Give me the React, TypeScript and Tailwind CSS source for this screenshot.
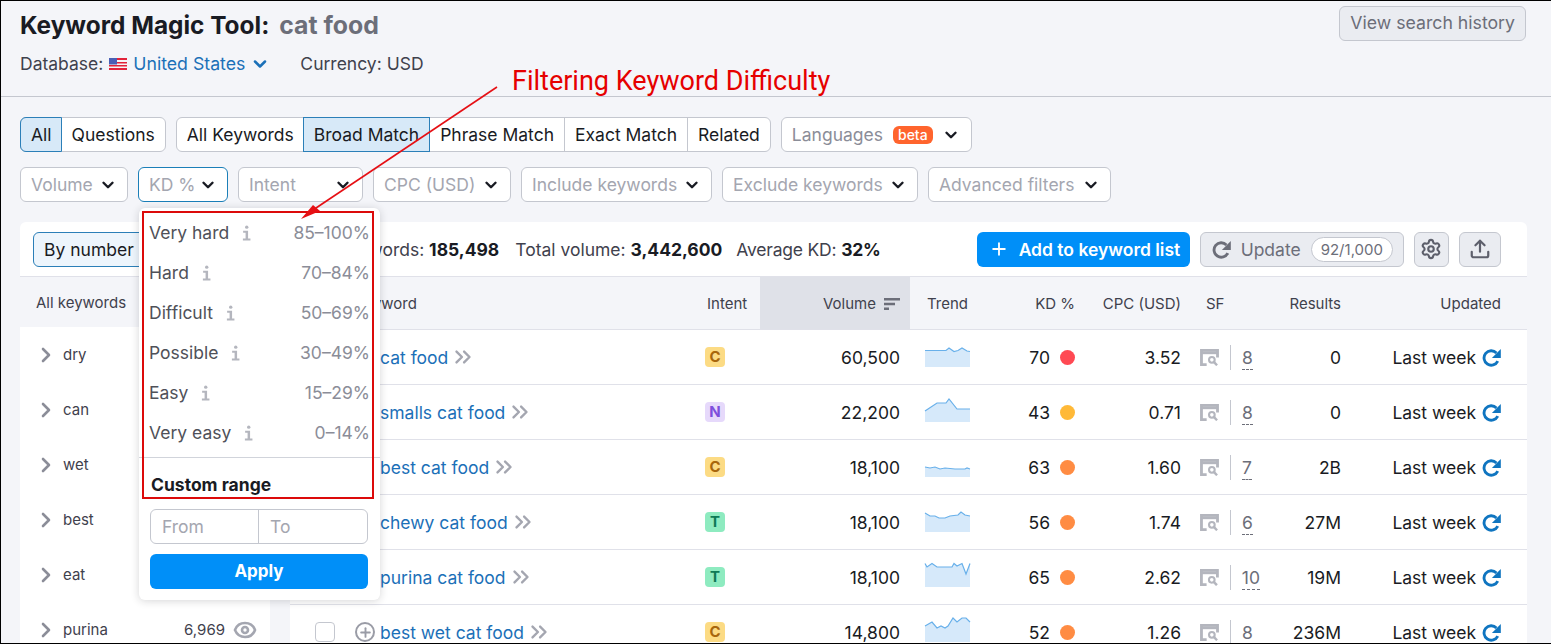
import { ChevronDown, ChevronRight, ChevronsRight, Eye, Plus, Settings, Upload } from "lucide-react";

const rows = [
	{ kw: "cat food", intent: "C", vol: "60,500", kd: 70, dot: "bg-[#ff4953]", cpc: "3.52", sf: "8", res: "0", spark: "0,3.5 21,3.5 24,1 29,4.5 33,3.5 37,1 42,4 45,4.5" },
	{ kw: "smalls cat food", intent: "N", vol: "22,200", kd: 43, dot: "bg-[#ffb938]", cpc: "0.71", sf: "8", res: "0", spark: "0,9 12,1 21,1 24,-3 32,7 36,7 45,7" },
	{ kw: "best cat food", intent: "C", vol: "18,100", kd: 63, dot: "bg-[#ff8c43]", cpc: "1.60", sf: "7", res: "2B", spark: "0,10 5,11 10,10 15,12 20,11 30,12 40,12 42,11 45,12" },
	{ kw: "chewy cat food", intent: "T", vol: "18,100", kd: 56, dot: "bg-[#ff8c43]", cpc: "1.74", sf: "6", res: "27M", spark: "0,1 5,4 10,4 14,6 20,6 25,4 33,3 36,0 40,3 45,4" },
	{ kw: "purina cat food", intent: "T", vol: "18,100", kd: 65, dot: "bg-[#ff8c43]", cpc: "2.62", sf: "10", res: "19M", spark: "0,-3.5 2,0 7,-3.5 12,0 27,0 29,-3.5 32,-1 37,-3.5 41,7 45,-3.5" },
	{ kw: "best wet cat food", intent: "C", vol: "14,800", kd: 52, dot: "bg-[#ff8c43]", cpc: "1.26", sf: "8", res: "236M", spark: "0,4 7,0 12,6 16,4 20,6 23,4 28,-4 32,0 37,-4 41,-4 45,0" },
];

const groups = ["dry", "can", "wet", "best", "eat", "purina"];

const levels = [
	{ name: "Very hard", range: "85–100%" },
	{ name: "Hard", range: "70–84%" },
	{ name: "Difficult", range: "50–69%" },
	{ name: "Possible", range: "30–49%" },
	{ name: "Easy", range: "15–29%" },
	{ name: "Very easy", range: "0–14%" },
];

const filters = [
	{ label: "Volume", w: "w-[108px]" },
	{ label: "KD %", w: "w-[90px]", active: true },
	{ label: "Intent", w: "w-[125px]" },
	{ label: "CPC (USD)", w: "w-[138px]" },
	{ label: "Include keywords", w: "w-[191px]" },
	{ label: "Exclude keywords", w: "w-[196px]" },
	{ label: "Advanced filters", w: "w-[183px]" },
];

const intentStyles: Record<string, string> = {
	C: "bg-[#fcdb84] text-[#a8660c]",
	N: "bg-[#e6d9fb] text-[#7e4fdc]",
	T: "bg-[#8eebc0] text-[#0e7a56]",
};

const rowGrid = "grid grid-cols-[410px_60px_150px_75px_100px_105px_70px_90px_177px]";

function Chevron() {
	return <ChevronDown size={18} strokeWidth={3.2} className="text-[#191b23] shrink-0" />;
}

function Refresh({ className }: { className: string }) {
	return (
		<svg viewBox="0 0 20 20" className={className} fill="none">
			<path d="M16.6 13.8A7.6 7.6 0 1 1 15.2 5.2" stroke="currentColor" strokeWidth="3" />
			<path d="M19.8 1v9.4h-9.4z" fill="currentColor" />
		</svg>
	);
}

function SerpIcon() {
	return (
		<svg viewBox="0 0 20 18" className="w-[19px] h-[17px] text-[#b4b6be]" fill="none">
			<path d="M7 16.5H1.5V1.5h17V9" stroke="currentColor" strokeWidth="3" />
			<path d="M1.5 4h17" stroke="currentColor" strokeWidth="3" />
			<circle cx="12.5" cy="11.5" r="3" stroke="currentColor" strokeWidth="2.2" />
			<path d="M14.8 14l3.2 3.2" stroke="currentColor" strokeWidth="2.6" />
		</svg>
	);
}

function InfoIcon() {
	return (
		<svg viewBox="0 0 8 14" className="w-[9px] h-4 text-[#b4b6be]" fill="currentColor">
			<circle cx="4.2" cy="1.8" r="1.5" />
			<path d="M1 5h4.4v6.8H7.5V13.6H.8v-1.8h2.4V6.8H1z" />
		</svg>
	);
}

function Flag() {
	return (
		<svg viewBox="0 0 18 12" className="w-[18px] h-3">
			<rect width="18" height="12" fill="#f5f5f5" />
			<path d="M0 0h18v2H0zM0 4h18v1.5H0zM0 7h18v1.5H0zM0 10h18v2H0z" fill="#e2233a" />
			<rect width="8" height="6.5" fill="#4a5fb5" />
		</svg>
	);
}

function Spark({ points }: { points: string }) {
	return (
		<svg viewBox="0 -5 45 25" className="w-[45px] h-[25px] -mt-[5px] overflow-visible">
			<polygon points={`0,20 ${points} 45,20`} fill="#d6e9fa" />
			<polyline points={points} fill="none" stroke="#68b0ea" strokeWidth="1.2" />
		</svg>
	);
}

export default function App() {
	return (
		<div className="relative w-[1551px] h-[644px] overflow-hidden bg-[#f4f5f9] border-t border-l border-b border-black font-['Inter',sans-serif] text-[17.5px] text-[#191b23]">
			<div className="h-[96px] border-b border-[#c4c7cf] pl-[19px]">
				<div className="flex justify-between pr-[25px] pt-[5px]">
					<h1 className="text-[24.4px] leading-[38px] font-bold">
						Keyword Magic Tool:<span className="ml-[10px] text-[24.8px] text-[#6c6e79]">cat food</span>
					</h1>
					<button className="h-[35px] px-[10px] rounded-md border border-[#c4c7cf] bg-[#eaecf1] text-[17.7px] text-[#6c6e79]">
						View search history
					</button>
				</div>
				<div className="mt-[6px] flex items-center leading-[28px]">
					<span className="text-[#3f414d]">Database:</span>
					<span className="ml-[6px]"><Flag /></span>
					<span className="ml-[6px] text-[17.7px] text-[#1b70b8]">United States</span>
					<ChevronDown size={20} strokeWidth={3} className="ml-[5px] text-[#1b70b8]" />
					<span className="ml-[30px] text-[#3f414d]">Currency: USD</span>
				</div>
			</div>

			<div className="pl-[19px] pt-[20px] flex gap-[10px] items-center">
				<div className="flex h-[35px] pt-[2px] rounded-md border border-[#c4c7cf] bg-white">
					<span className="-mt-[3px] -mb-px -ml-px pt-[2px] pl-[10px] pr-[9px] flex items-center border border-[#2b7fb8] bg-[#d7e9f8] rounded-l-md">All</span>
					<span className="px-[10px] flex items-center">Questions</span>
				</div>
				<div className="flex h-[35px] rounded-md border border-[#c4c7cf] bg-white">
					<span className="pl-[10px] pr-[9px] pt-[2px] flex items-center">All Keywords</span>
					<span className="px-[10px] pt-[2px] flex items-center -my-px border border-[#2b7fb8] bg-[#d7e9f8]">Broad Match</span>
					<span className="px-[10px] pt-[2px] flex items-center border-r border-[#c4c7cf]">Phrase Match</span>
					<span className="px-[10px] pt-[2px] flex items-center border-r border-[#c4c7cf]">Exact Match</span>
					<span className="px-[10px] pt-[2px] flex items-center">Related</span>
				</div>
				<div className="flex items-center h-[35px] pl-[10px] pr-[11px] rounded-md border border-[#c4c7cf] bg-white">
					<span className="pt-[2px] text-[#8b8d98]">Languages</span>
					<span className="ml-[10px] rounded-md bg-[#ff642d] text-white text-[14px] leading-[18px] font-medium px-[5px]">beta</span>
					<span className="ml-[9px]"><Chevron /></span>
				</div>
			</div>

			<div className="pl-[19px] pt-[15px] flex gap-[10px]">
				{filters.map((f) => (
					<div
						key={f.label}
						className={`${f.w} h-[35px] px-[10px] flex items-center justify-between rounded-md border bg-white ${f.active ? "border-[#1b7fb8]" : "border-[#c4c7cf]"}`}
					>
						<span className="pt-[2px] text-[#a4a6b0] whitespace-nowrap">{f.label}</span>
						<Chevron />
					</div>
				))}
			</div>

			<div className="ml-[19px] mt-5 w-[1507px] rounded-t-md bg-white">
				<div className="h-[55px] border-b border-[#e0e1e9] pl-[13px] flex items-center">
					<span className="h-[35px] w-[130px] flex items-center px-[10px] pt-[2px] rounded-md border border-[#2b7fb8] bg-[#edf5fc]">By number</span>
					<div className="ml-[151px] pt-[2px] flex gap-4 whitespace-nowrap text-[#3f414d]">
						<span>All keywords: <b className="text-[#191b23]">185,498</b></span>
						<span>Total volume: <b className="text-[#191b23]">3,442,600</b></span>
						<span className="-ml-[2px] tracking-[-0.2px]">Average KD: <b className="text-[#191b23]">32%</b></span>
					</div>
					<button className="ml-[96px] h-[35px] w-[213px] flex items-center gap-[10px] pl-[12px] rounded-md bg-[#008ff8] text-white font-semibold whitespace-nowrap">
						<Plus size={20} strokeWidth={2.2} />
						<span className="pt-[2px]">Add to keyword list</span>
					</button>
					<div className="ml-[10px] h-[35px] w-[204px] flex items-center pl-[11px] rounded-md border border-[#c4c7cf] bg-[#eaecf1] text-[#6c6e79]">
						<Refresh className="w-[19px] h-[19px] shrink-0" />
						<span className="ml-[10px] pt-[2px]">Update</span>
						<span className="ml-[10px] h-[25px] px-[9px] pt-[2px] flex items-center rounded-full border border-[#c4c7cf] bg-white text-[15px]">92/1,000</span>
					</div>
					<span className="ml-[10px] w-[35px] h-[35px] flex items-center justify-center rounded-md border border-[#c4c7cf] bg-[#eaecf1] text-[#5d5f6b]">
						<Settings size={22} strokeWidth={2.3} />
					</span>
					<span className="ml-[10px] w-[42px] h-[35px] flex items-center justify-center rounded-md border border-[#c4c7cf] bg-[#eaecf1] text-[#5d5f6b]">
						<Upload size={22} strokeWidth={2.4} />
					</span>
				</div>

				<div className="flex bg-[#f4f5f9]">
					<div className="w-[250px] shrink-0 bg-white">
						<div className="h-[50px] bg-[#f4f5f9] pl-4 pt-[2px] flex items-center text-[15px] text-[#3f414d]">All keywords</div>
						{groups.map((g) => (
							<div key={g} className="h-[55px] flex items-center pl-[14px] pr-[13px] text-[15px] text-[#3f414d]">
								<ChevronRight size={24} strokeWidth={2.6} className="text-[#8b8d98]" />
								<span className="ml-[5px] pt-[2px] flex-1">{g}</span>
								{g === "purina" && (
									<>
										<span className="pt-[2px]">6,969</span>
										<Eye size={24} strokeWidth={2.6} className="ml-2 text-[#a4a6b0]" />
									</>
								)}
							</div>
						))}
					</div>

					<div className="ml-5 flex-1 bg-white">
						<div className={`${rowGrid} h-[53px] bg-[#f4f5f9] border-b border-[#e0e1e9] items-center text-[15px] text-[#3f414d]`}>
							<span className="pl-[65px] pt-[2px]">Keyword</span>
							<span className="pl-[7px] pt-[2px]">Intent</span>
							<span className="self-stretch bg-[#dfe1e8] flex items-center justify-end gap-[8px] pr-[10px] pt-[2px]">
								Volume
								<svg viewBox="0 0 16 12" className="w-4 h-3 text-[#6c6e79]" fill="currentColor">
									<path d="M0 0h16v2.4H0zM0 4.8h11v2.4H0zM0 9.6h5V12H0z" />
								</svg>
							</span>
							<span className="pl-[17px] pt-[2px]">Trend</span>
							<span className="text-right pr-[10px] pt-[2px]">KD %</span>
							<span className="text-right pr-[9px] pt-[2px]">CPC (USD)</span>
							<span className="pl-[16px] pt-[2px]">SF</span>
							<span className="text-right pr-[9px] pt-[2px]">Results</span>
							<span className="text-right pr-[26px] pt-[2px]">Updated</span>
						</div>
						{rows.map((r) => (
							<div key={r.kw} className={`${rowGrid} h-[55px] border-b border-[#e0e1e9] items-center`}>
								<div className="flex items-center">
									<span className="ml-[25px] w-5 h-5 shrink-0 rounded-[4px] border border-[#c4c7cf] bg-white" />
									<span className="ml-[20px] w-5 h-5 shrink-0 rounded-full border-2 border-[#9a9ca6] flex items-center justify-center text-[#9a9ca6]">
										<Plus size={15} strokeWidth={3} />
									</span>
									<span className="ml-[5px] pt-[2px] text-[#1b70b8] whitespace-nowrap">{r.kw}</span>
									<ChevronsRight size={26} strokeWidth={2.2} className="ml-[2px] shrink-0 text-[#a4a6b0]" />
								</div>
								<span className={`ml-[5px] w-5 h-5 rounded-[4px] flex items-center justify-center text-[15px] font-bold ${intentStyles[r.intent]}`}>
									{r.intent}
								</span>
								<span className="pt-[2px] text-right pr-[10px]">{r.vol}</span>
								<div className="pl-[15px] flex">
									<Spark points={r.spark} />
								</div>
								<div className="flex items-center justify-end gap-[10px] pr-[10px]">
									<span className="pt-[2px]">{r.kd}</span>
									<span className={`w-[15px] h-[15px] rounded-full ${r.dot}`} />
								</div>
								<span className="pt-[2px] text-right pr-[9px]">{r.cpc}</span>
								<div className="flex items-center pl-[10px]">
									<SerpIcon />
									<span className="ml-[11px] h-[25px] border-l border-[#c4c7cf]" />
									<span className={`ml-[11px] pt-[2px] leading-[22px] text-[#6c6e79] ${r.kw === "best wet cat food" ? "" : "border-b border-dashed border-[#6c6e79]"}`}>{r.sf}</span>
								</div>
								<span className="pt-[2px] text-right pr-[9px]">{r.res}</span>
								<div className="flex items-center justify-end gap-[6px] pr-[26px] whitespace-nowrap">
									<span className="pt-[2px]">Last week</span>
									<Refresh className="w-[19px] h-[19px] text-[#0f75c0] shrink-0" />
								</div>
							</div>
						))}
					</div>
				</div>
			</div>

			{/* KD dropdown, sits over the table */}
			<div className="absolute left-[138px] top-[207px] w-[241px] h-[392px] rounded-md bg-white shadow-[0_1px_8px_rgba(25,27,35,0.18)]">
				<div className="pt-[5px]">
					{levels.map((l) => (
						<div key={l.name} className="h-10 flex items-center pl-[10px] pr-[10px] text-[#4f5159]">
							<span>{l.name}</span>
							<span className="ml-[13px]"><InfoIcon /></span>
							<span className="ml-auto text-[#8b8d98]">{l.range}</span>
						</div>
					))}
				</div>
				<div className="mt-1 border-t border-[#d1d4db] pt-[15px] pl-3 font-bold leading-[24px]">Custom range</div>
				<div className="ml-[11px] mt-3 w-[218px] flex h-[35px] rounded-md border border-[#c4c7cf] text-[#a4a6b0]">
					<span className="w-[108px] px-[11px] pt-[2px] flex items-center border-r border-[#c4c7cf]">From</span>
					<span className="px-[11px] pt-[2px] flex items-center">To</span>
				</div>
				<button className="ml-[11px] mt-[10px] w-[218px] h-[35px] rounded-md bg-[#008ff8] text-[17px] text-white font-bold">Apply</button>
			</div>

			{/* annotation drawn on top of the screenshot */}
			<div className="absolute left-[141px] top-[210px] w-[232px] h-[288px] border-2 border-[#dc0a0a]" />
			<svg viewBox="0 0 1551 644" className="absolute -left-px -top-px w-[1551px] h-[644px] pointer-events-none">
				<line x1="497" y1="87" x2="313" y2="210" stroke="#e60f14" strokeWidth="1.6" />
				<polygon points="301,219 313,205 320,211" fill="#e60f14" />
			</svg>
			<span className="absolute left-[511px] top-[61px] font-['Roboto',sans-serif] text-[27px] leading-[38px] text-[#e60000] whitespace-nowrap">
				Filtering Keyword Difficulty
			</span>
		</div>
	);
}
